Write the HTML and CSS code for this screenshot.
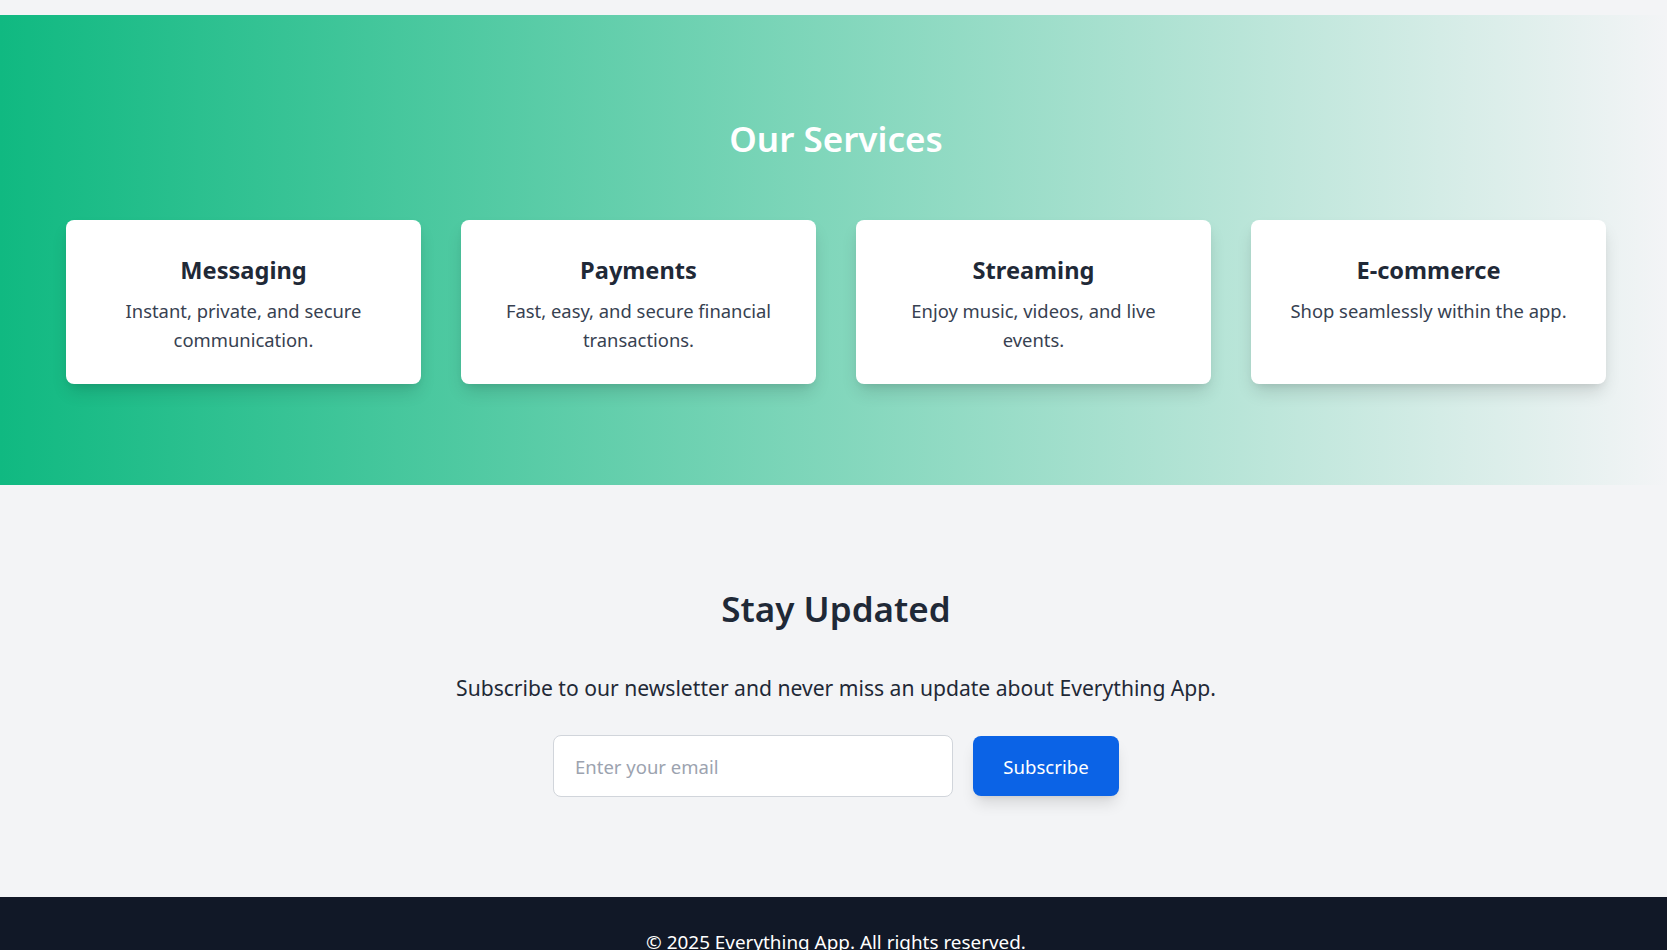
FILE: index.html
```html
<!DOCTYPE html>
<html lang="en">
<head>
<meta charset="utf-8">
<title>Everything App</title>
<link rel="stylesheet" href="styles.css">
</head>
<body>
<div class="topband"></div>
<section class="services">
  <h2 class="section-title light">Our Services</h2>
  <div class="cards">
    <div class="card">
      <h3 class="card-title">Messaging</h3>
      <p class="card-text">Instant, private, and secure communication.</p>
    </div>
    <div class="card">
      <h3 class="card-title">Payments</h3>
      <p class="card-text">Fast, easy, and secure financial transactions.</p>
    </div>
    <div class="card">
      <h3 class="card-title">Streaming</h3>
      <p class="card-text">Enjoy music, videos, and live events.</p>
    </div>
    <div class="card">
      <h3 class="card-title">E-commerce</h3>
      <p class="card-text">Shop seamlessly within the app.</p>
    </div>
  </div>
</section>
<section class="newsletter">
  <h2 class="section-title dark">Stay Updated</h2>
  <p class="newsletter-text">Subscribe to our newsletter and never miss an update about Everything App.</p>
  <form class="subscribe-form">
    <input class="email-input" type="email" placeholder="Enter your email">
    <button class="subscribe-btn" type="button">Subscribe</button>
  </form>
</section>
<footer class="footer">
  <p class="copyright">&copy; 2025 Everything App. All rights reserved.</p>
</footer>
</body>
</html>
```
FILE: styles.css
```css
* { box-sizing: border-box; }
html, body { margin: 0; padding: 0; }
body {
  background: #f3f4f6;
  font-family: "Noto Sans", "Open Sans", sans-serif;
  color: #1f2937;
}
.topband { height: 15px; }
.services {
  background: linear-gradient(to right, #10b981, #f3f4f6);
  padding: 104px 61px 101px 66px;
}
.section-title {
  margin: 0;
  text-align: center;
  font-size: 35px;
  line-height: 40px;
  font-weight: 600;
}
.section-title.light { color: #ffffff; margin-bottom: 61px; }
.section-title.dark { color: #1f2937; }
.cards {
  display: grid;
  grid-template-columns: repeat(4, 1fr);
  gap: 40px;
}
.card {
  background: #ffffff;
  border-radius: 8px;
  height: 164px;
  padding: 34px 32px 30px;
  text-align: center;
  box-shadow: 0 10px 18px -3px rgba(0,0,0,0.14), 0 4px 8px -4px rgba(0,0,0,0.1);
}
.card-title {
  margin: 0 0 10px;
  font-size: 23.6px;
  line-height: 32px;
  font-weight: 700;
  color: #1f2937;
}
.card-text {
  margin: 0;
  font-size: 18.4px;
  line-height: 29.25px;
  color: #374151;
}
.newsletter {
  padding: 104px 61px 100px 66px;
  text-align: center;
}
.newsletter-text {
  margin: 45px 0 0;
  font-size: 21.1px;
  line-height: 28px;
  color: #1f2937;
}
.subscribe-form {
  margin: 33px 0 0;
  display: flex;
  justify-content: center;
  align-items: center;
  gap: 20px;
}
.email-input {
  width: 400px;
  height: 62px;
  border: 1px solid #d1d5db;
  border-radius: 8px;
  background: #ffffff;
  padding: 0 21px;
  font-family: inherit;
  font-size: 18.5px;
  color: #1f2937;
  outline: none;
}
.email-input::placeholder { color: #9ca3af; }
.subscribe-btn {
  width: 146px;
  height: 60px;
  border: none;
  border-radius: 8px;
  background: #0b63e6;
  color: #ffffff;
  font-family: inherit;
  font-size: 18.6px;
  box-shadow: 0 10px 15px -3px rgba(0,0,0,0.12), 0 4px 6px -4px rgba(0,0,0,0.1);
  cursor: pointer;
}
.footer {
  background: #111827;
  padding: 31px 61px 32px 66px;
  text-align: center;
}
.copyright {
  margin: 0;
  color: #ffffff;
  font-size: 18.9px;
  line-height: 28px;
}
```
